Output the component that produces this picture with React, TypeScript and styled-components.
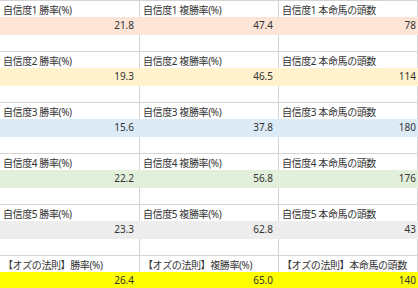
import styled, { createGlobalStyle } from 'styled-components'

const GlobalStyle = createGlobalStyle`
  html, body {
    margin: 0;
    padding: 0;
    background: #ffffff;
  }

  body {
    font-family: "Noto Sans", "Noto Sans CJK JP", sans-serif;
    color: #333333;
  }
`

type Stat = {
  label: string
  win: string
  place: string
  count: string
  color: string
}

const STATS: Stat[] = [
  { label: '自信度1 ', win: '21.8', place: '47.4', count: '78', color: '#fce4d6' },
  { label: '自信度2 ', win: '19.3', place: '46.5', count: '114', color: '#fff2cc' },
  { label: '自信度3 ', win: '15.6', place: '37.8', count: '180', color: '#ddebf7' },
  { label: '自信度4 ', win: '22.2', place: '56.8', count: '176', color: '#e2efda' },
  { label: '自信度5 ', win: '23.3', place: '62.8', count: '43', color: '#ededed' },
  { label: '【オズの法則】', win: '26.4', place: '65.0', count: '140', color: '#ffff00' },
]

const StyledSheet = styled.div`
  width: 418px;
  height: 288px;
  overflow: hidden;
`

const StyledBlock = styled.div`
  border-top: 1px solid #d4d4d4;
`

const StyledRow = styled.div<{ $height: number; $bg?: string }>`
  display: grid;
  grid-template-columns: 140px 139px 139px;
  height: ${({ $height }) => `${$height}px`};
  background-color: ${({ $bg }) => $bg ?? 'transparent'};
`

const StyledLabelCell = styled.div`
  display: flex;
  align-items: center;
  padding-left: 3px;
  border-right: 1px solid #d4d4d4;
  font-family: "Noto Sans", "Noto Sans CJK JP", sans-serif;
  font-size: 10px;
  letter-spacing: -0.4px;
  white-space: pre;
  overflow: hidden;
`

const StyledValueCell = styled.div`
  display: flex;
  align-items: center;
  justify-content: flex-end;
  padding: 0 6px 2px 0;
  font-size: 10px;

  &:last-child {
    padding-right: 2px;
  }
`

const StyledBlankCell = styled.div`
  border-right: 1px solid #d4d4d4;
`

function StatBlock({ stat }: { stat: Stat }) {
  return (
    <StyledBlock>
      <StyledRow $height={16}>
        <StyledLabelCell>{stat.label}勝率(%)</StyledLabelCell>
        <StyledLabelCell>{stat.label}複勝率(%)</StyledLabelCell>
        <StyledLabelCell>{stat.label}本命馬の頭数</StyledLabelCell>
      </StyledRow>
      <StyledRow $height={18} $bg={stat.color}>
        <StyledValueCell>{stat.win}</StyledValueCell>
        <StyledValueCell>{stat.place}</StyledValueCell>
        <StyledValueCell>{stat.count}</StyledValueCell>
      </StyledRow>
      <StyledRow $height={16}>
        <StyledBlankCell />
        <StyledBlankCell />
        <StyledBlankCell />
      </StyledRow>
    </StyledBlock>
  )
}

export default function App() {
  return (
    <>
      <GlobalStyle />
      <StyledSheet>
        {STATS.map((stat) => (
          <StatBlock key={stat.label} stat={stat} />
        ))}
      </StyledSheet>
    </>
  )
}
